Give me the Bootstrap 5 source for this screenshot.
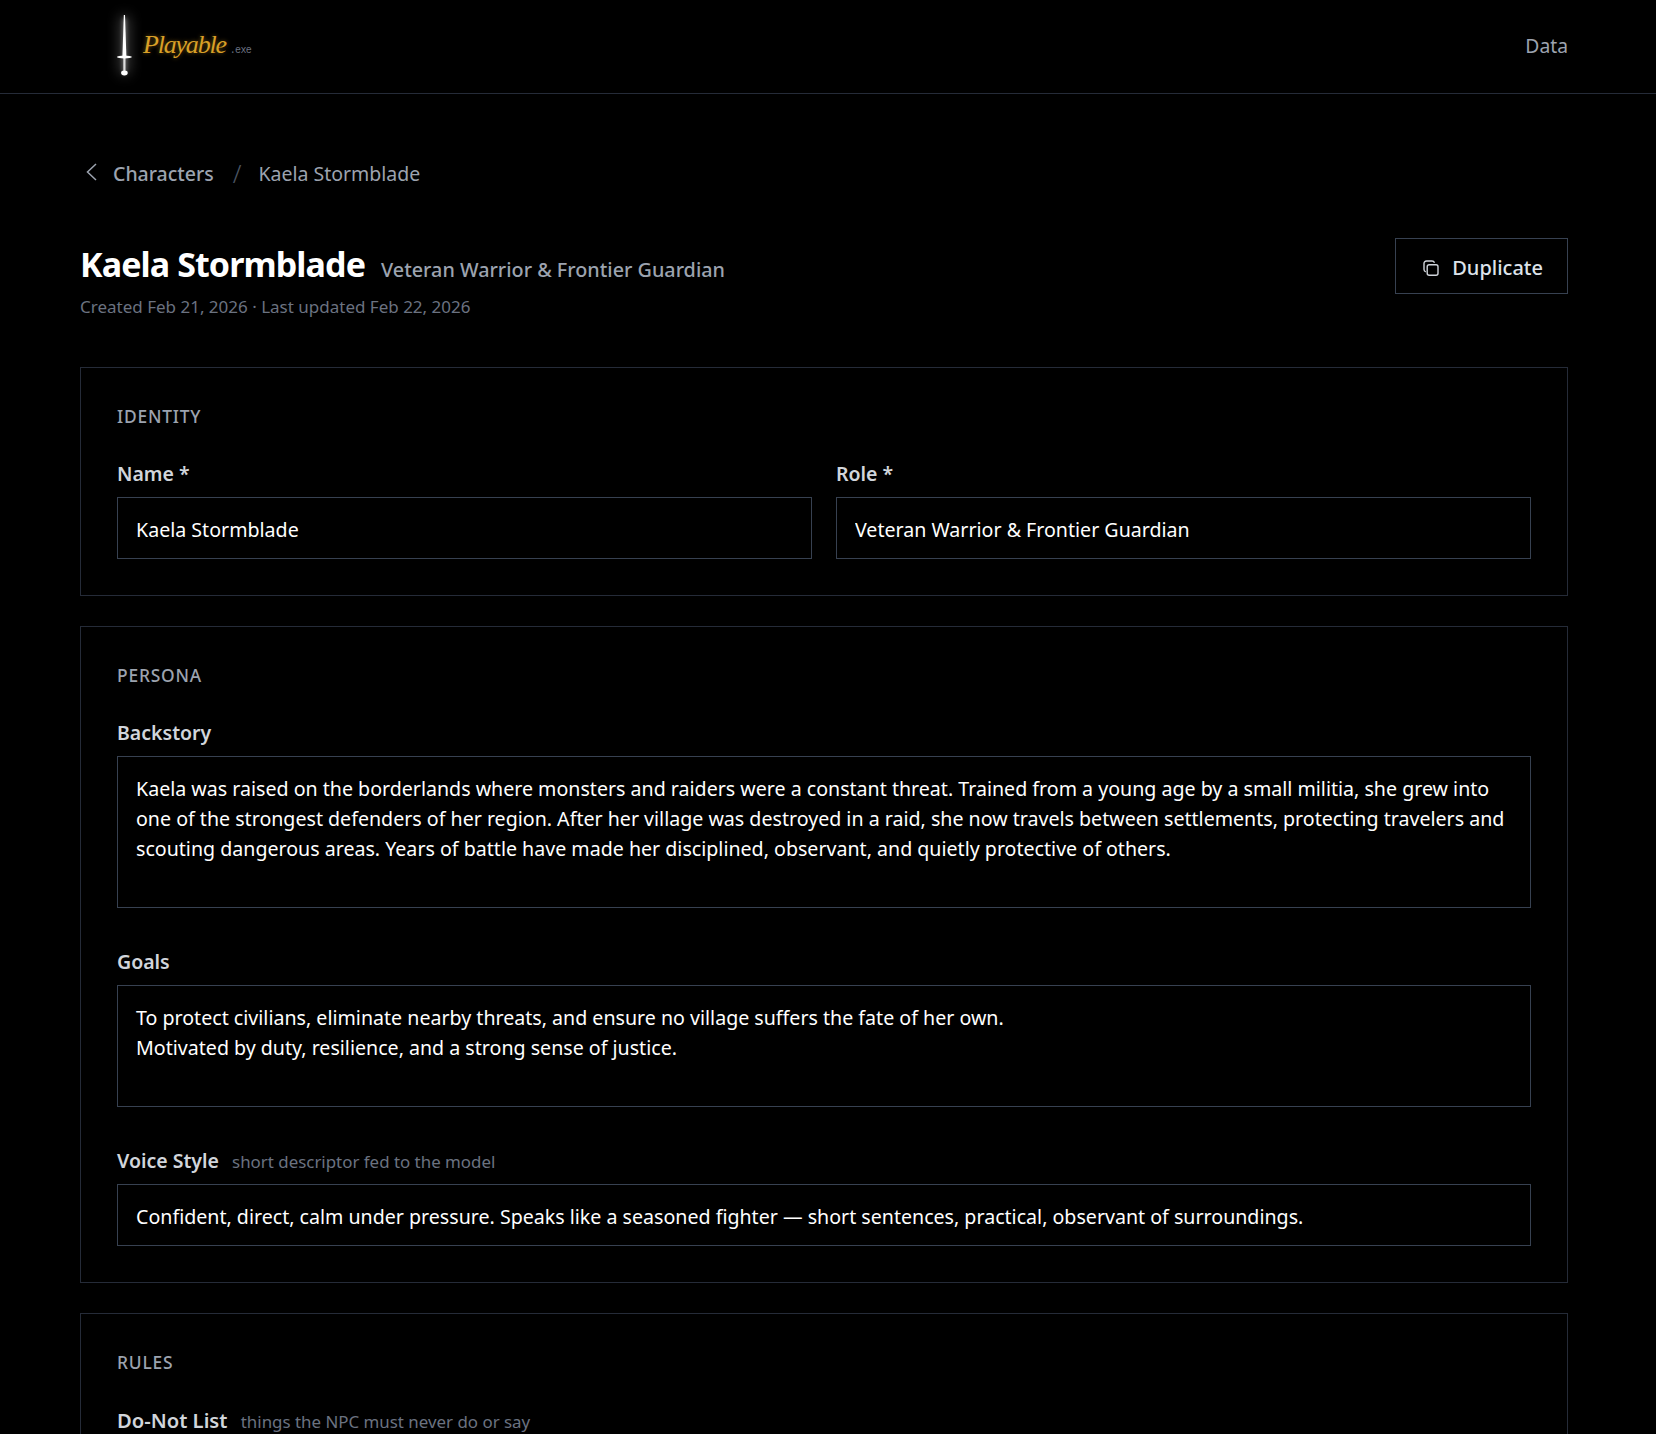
<!DOCTYPE html>
<html lang="en">
<head>
    <meta charset="UTF-8">
    <title>Kaela Stormblade</title>
    <link href="https://cdn.jsdelivr.net/npm/bootstrap@5.3.0/dist/css/bootstrap.min.css" rel="stylesheet">
    <style>
        html, body {
            height: 100%;
        }
        body {
            background-color: #000;
            color: #fff;
            font-family: "Noto Sans", "Open Sans", sans-serif;
            font-size: 19px;
            overflow: hidden;
        }
        .top-bar {
            height: 94px;
            padding: 0 88px 0 80px;
            border-bottom: 1px solid #252b38;
        }
        .logo-sword {
            width: 72px;
            height: 88px;
            margin: -6px -21px 0 12px;
            flex: none;
        }
        .logo-name {
            font-family: "Liberation Serif", serif;
            font-style: italic;
            font-size: 26px;
            letter-spacing: -1.2px;
            color: #d9a027;
            text-shadow: 0 0 4px rgba(217, 160, 39, .5);
            margin-top: -4px;
        }
        .logo-ext {
            font-family: "Liberation Mono", monospace;
            font-size: 10px;
            letter-spacing: -.7px;
            color: #6b7280;
            margin-left: 4px;
        }
        .data-link {
            color: #9ca3af;
            font-size: 19.3px;
            text-decoration: none;
        }
        .page-body {
            padding: 65px 88px 0 80px;
        }
        .crumbs {
            margin-bottom: 50px;
            font-size: 19.5px;
            --bs-breadcrumb-item-padding-x: 19px;
        }
        .crumbs .breadcrumb-item a {
            color: #9ca3af;
            font-weight: 500;
            text-decoration: none;
        }
        .crumbs .breadcrumb-item.active {
            color: #9ca3af;
        }
        .crumbs .breadcrumb-item + .breadcrumb-item::before {
            color: #4b5563;
            font-size: 25px;
            font-weight: 300;
            line-height: 29px;
            padding-right: 17px;
        }
        .back-arrow {
            width: 17px;
            height: 20px;
            margin-right: 16px;
            margin-top: -3px;
        }
        .title-block {
            padding-top: 6px;
        }
        .page-title {
            font-size: 34px;
            font-weight: 700;
            letter-spacing: -.9px;
            color: #fff;
        }
        .page-role {
            font-size: 19.8px;
            font-weight: 500;
            color: #9ca3af;
        }
        .page-dates {
            font-size: 17px;
            color: #6b7280;
            margin-top: 9px;
        }
        .copy-btn {
            --bs-btn-color: #dde3ea;
            --bs-btn-border-color: #374151;
            --bs-btn-hover-color: #fff;
            --bs-btn-hover-bg: transparent;
            --bs-btn-hover-border-color: #4b5563;
            --bs-btn-border-radius: 0;
            --bs-btn-font-size: 20px;
            --bs-btn-font-weight: 500;
            --bs-btn-padding-x: 24px;
            gap: 13px;
            padding-top: 9px;
            padding-bottom: 5px;
            width: 173px;
            height: 56px;
        }
        .page-head {
            margin-bottom: 47px;
        }
        .panel-box {
            --bs-card-bg: #000;
            --bs-card-border-color: #252b38;
            --bs-card-border-radius: 0;
            --bs-card-inner-border-radius: 0;
            --bs-card-spacer-x: 36px;
            --bs-card-spacer-y: 36px;
            --bs-card-color: #fff;
            margin-bottom: 30px;
        }
        .panel-head {
            font-size: 17.4px;
            font-weight: 500;
            line-height: 25px;
            letter-spacing: .8px;
            text-transform: uppercase;
            color: #9ca3af;
            margin-bottom: 30px;
        }
        .field-label {
            font-size: 19.5px;
            font-weight: 600;
            line-height: 30px;
            color: #d1d5db;
            margin-bottom: 8px;
        }
        .voice-label {
            margin-bottom: 7px;
        }
        .rules-label {
            font-size: 20.2px;
        }
        .field-hint {
            font-size: 16.9px;
            font-weight: 400;
            color: #6b7280;
            margin-left: 8px;
        }
        .field-input {
            background: #000;
            color: #fff;
            border: 1px solid #374151;
            border-radius: 0;
            font-size: 19.62px;
            line-height: 30px;
            padding: 17px 18px 13px;
        }
        .field-input:focus {
            background: #000;
            color: #fff;
            border-color: #4b5563;
            box-shadow: none;
        }
        .field-gap {
            margin-bottom: 39px;
        }
        .area-backstory {
            height: 152px;
            resize: none;
        }
        .area-goals {
            height: 122px;
            resize: none;
        }
    </style>
</head>
<body>
    <nav class="top-bar d-flex align-items-center justify-content-between">
        <a class="d-flex align-items-center text-decoration-none" href="#">
            <svg class="logo-sword" viewBox="0 0 72 88" aria-hidden="true">
                <defs>
                    <filter id="swordGlow" x="-400%" y="-30%" width="900%" height="160%">
                        <feGaussianBlur stdDeviation="7"/>
                    </filter>
                    <filter id="swordBloom" x="-300%" y="-20%" width="700%" height="140%">
                        <feGaussianBlur stdDeviation="2"/>
                    </filter>
                    <filter id="swordSoft" x="-100%" y="-20%" width="300%" height="140%">
                        <feGaussianBlur stdDeviation=".7"/>
                    </filter>
                </defs>
                <path d="M29 16h7v58h-7z" fill="#fff" opacity=".35" filter="url(#swordGlow)"/>
                <path d="M31 18h3v56h-3z" fill="#fff" opacity=".45" filter="url(#swordBloom)"/>
                <g filter="url(#swordSoft)" fill="#fff">
                    <path d="M31.800 15h1.200l1.400 42h-4z"/>
                    <ellipse cx="32.400" cy="57" rx="7.500" ry="1.400"/>
                    <path d="M31.300 58h2.200v13h-2.200z" opacity=".8"/>
                    <ellipse cx="32.400" cy="73" rx="3.300" ry="2.400"/>
                </g>
            </svg>
            <span class="logo-name">Playable</span><span class="logo-ext align-self-center mt-2">.exe</span>
        </a>
        <a class="data-link" href="#">Data</a>
    </nav>

    <main class="page-body">
        <nav aria-label="breadcrumb">
            <ol class="breadcrumb crumbs align-items-center">
                <li class="breadcrumb-item d-flex align-items-center">
                    <svg class="back-arrow" viewBox="0 0 17 20" fill="none" stroke="#9ca3af" stroke-width="1.500" aria-hidden="true"><path d="M16 2 7.500 10 16 18"/></svg>
                    <a href="#">Characters</a>
                </li>
                <li class="breadcrumb-item active d-flex align-items-center" aria-current="page">Kaela Stormblade</li>
            </ol>
        </nav>

        <div class="page-head d-flex justify-content-between align-items-start">
            <div class="title-block">
                <div class="d-flex align-items-baseline gap-3">
                    <h1 class="page-title m-0">Kaela Stormblade</h1>
                    <span class="page-role">Veteran Warrior &amp; Frontier Guardian</span>
                </div>
                <div class="page-dates">Created Feb 21, 2026 · Last updated Feb 22, 2026</div>
            </div>
            <button type="button" class="btn copy-btn d-flex align-items-center justify-content-end">
                <svg width="16" height="16" viewBox="0 0 16 16" fill="none" stroke="#d1d5db" stroke-width="1.400" aria-hidden="true">
                    <rect x="4.200" y="4.700" width="10.800" height="10.600" rx="2"/>
                    <path d="M2.800 11.800C1.600 11.400 1 10.600 1 9.500V3.500C1 2 2 1 3.500 1h5.500c1.200 0 2.100.7 2.500 1.800"/>
                </svg>
                Duplicate
            </button>
        </div>

        <section class="card panel-box">
            <div class="card-body">
                <div class="panel-head">Identity</div>
                <div class="row gx-4">
                    <div class="col-6">
                        <label class="form-label field-label" for="npcName">Name *</label>
                        <input class="form-control field-input" id="npcName" type="text" value="Kaela Stormblade">
                    </div>
                    <div class="col-6">
                        <label class="form-label field-label" for="npcRole">Role *</label>
                        <input class="form-control field-input" id="npcRole" type="text" value="Veteran Warrior &amp; Frontier Guardian">
                    </div>
                </div>
            </div>
        </section>

        <section class="card panel-box">
            <div class="card-body">
                <div class="panel-head">Persona</div>
                <div class="field-gap">
                    <label class="form-label field-label" for="npcBackstory">Backstory</label>
                    <textarea class="form-control field-input area-backstory" id="npcBackstory">Kaela was raised on the borderlands where monsters and raiders were a constant threat. Trained from a young age by a small militia, she grew into one of the strongest defenders of her region. After her village was destroyed in a raid, she now travels between settlements, protecting travelers and scouting dangerous areas. Years of battle have made her disciplined, observant, and quietly protective of others.</textarea>
                </div>
                <div class="field-gap">
                    <label class="form-label field-label" for="npcGoals">Goals</label>
                    <textarea class="form-control field-input area-goals" id="npcGoals">To protect civilians, eliminate nearby threats, and ensure no village suffers the fate of her own.
Motivated by duty, resilience, and a strong sense of justice.</textarea>
                </div>
                <div>
                    <label class="form-label field-label voice-label" for="npcVoice">Voice Style <span class="field-hint">short descriptor fed to the model</span></label>
                    <input class="form-control field-input" id="npcVoice" type="text" value="Confident, direct, calm under pressure. Speaks like a seasoned fighter — short sentences, practical, observant of surroundings.">
                </div>
            </div>
        </section>

        <section class="card panel-box">
            <div class="card-body">
                <div class="panel-head">Rules</div>
                <label class="form-label field-label rules-label" for="npcRules">Do-Not List <span class="field-hint">things the NPC must never do or say</span></label>
            </div>
        </section>
    </main>

    <script src="https://cdn.jsdelivr.net/npm/bootstrap@5.3.0/dist/js/bootstrap.bundle.min.js"></script>
</body>
</html>
